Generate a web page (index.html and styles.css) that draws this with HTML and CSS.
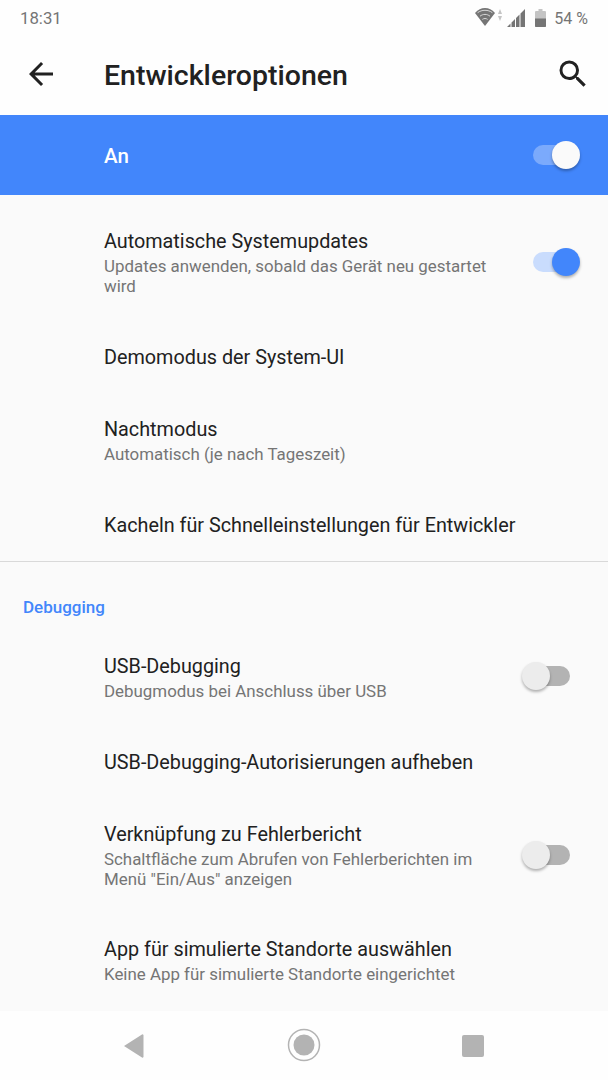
FILE: index.html
```html
<!doctype html>
<html lang="de">
  <head>
    <meta charset="UTF-8" />
    <title>Entwickleroptionen</title>
    <link rel="stylesheet" href="styles.css">
  </head>
  <body>
    <div class="status-bar">
      <span class="time">18:31</span>
      <div class="status-icons">
        <svg class="wifi" width="28" height="20" viewBox="0 0 28 20">
          <path d="M10 18 0 5C3 1.600 6.200 0 10 0s7 1.600 10 5z" fill="#757575" />
          <path d="M2.600 4.700C4.800 3.100 7.200 2.300 10 2.300s5.200.8 7.400 2.400M5 8.200C6.500 7 8.200 6.400 10 6.400s3.500.6 5 1.800M7.400 11.400c.8-.6 1.600-.9 2.600-.9s1.800.3 2.600.9" fill="none" stroke="#d8d8d8" stroke-width="1" />
          <path d="M23 6 25 1 27 6zM23 8 25 13 27 8z" fill="#c4c4c4" />
        </svg>
        <svg class="signal" width="18" height="18" viewBox="0 0 18 18">
          <path d="M0 18 3.500 14.500V18zM4.500 18V13.500L8 10V18zM9 18V9L12.500 5.500V18zM13.500 18V4.500L18 0V18z" fill="#757575" />
        </svg>
        <svg class="battery" width="11" height="18" viewBox="0 0 11 18">
          <path d="M3.500 0h4v2H10a1 1 0 0 1 1 1v15H0V3a1 1 0 0 1 1-1h2.500z" fill="#c4c4c4" />
          <path d="M0 9.500h11V17a1 1 0 0 1-1 1H1a1 1 0 0 1-1-1z" fill="#757575" />
        </svg>
        <span class="battery-text">54 %</span>
      </div>
    </div>

    <div class="toolbar">
      <svg class="icon-back" width="36" height="36" viewBox="0 0 24 24">
        <path d="M20 11H7.830l5.590-5.590L12 4l-8 8 8 8 1.410-1.410L7.830 13H20z" fill="#212121" />
      </svg>
      <h1>Entwickleroptionen</h1>
      <svg class="icon-search" width="36" height="36" viewBox="0 0 24 24">
        <path d="M15.500 14h-.79l-.28-.27A6.470 6.470 0 0 0 16 9.500 6.500 6.500 0 1 0 9.500 16c1.610 0 3.090-.59 4.230-1.570l.27.28v.79l5 4.990L20.490 19l-4.990-5zm-6 0C7.010 14 5 11.990 5 9.500S7.010 5 9.500 5 14 7.010 14 9.500 11.990 14 9.500 14z" fill="#212121" />
      </svg>
    </div>

    <div class="master-bar">
      <span>An</span>
      <div class="switch switch-master"><div class="thumb"></div></div>
    </div>

    <div class="list">
      <div class="row row-first">
        <div class="row-text">
          <div class="title">Automatische Systemupdates</div>
          <div class="sub">Updates anwenden, sobald das Gerät neu gestartet wird</div>
        </div>
        <div class="switch switch-on"><div class="thumb"></div></div>
      </div>
      <div class="row">
        <div class="row-text"><div class="title">Demomodus der System-UI</div></div>
      </div>
      <div class="row">
        <div class="row-text">
          <div class="title">Nachtmodus</div>
          <div class="sub">Automatisch (je nach Tageszeit)</div>
        </div>
      </div>
      <div class="row">
        <div class="row-text"><div class="title">Kacheln für Schnelleinstellungen für Entwickler</div></div>
      </div>

      <div class="section">
        <div class="section-title">Debugging</div>
        <div class="row row-usb">
          <div class="row-text">
            <div class="title">USB-Debugging</div>
            <div class="sub">Debugmodus bei Anschluss über USB</div>
          </div>
          <div class="switch switch-off"><div class="thumb"></div></div>
        </div>
        <div class="row">
          <div class="row-text"><div class="title">USB-Debugging-Autorisierungen aufheben</div></div>
        </div>
        <div class="row">
          <div class="row-text">
            <div class="title">Verknüpfung zu Fehlerbericht</div>
            <div class="sub">Schaltfläche zum Abrufen von Fehlerberichten im Menü "Ein/Aus" anzeigen</div>
          </div>
          <div class="switch switch-off"><div class="thumb"></div></div>
        </div>
        <div class="row">
          <div class="row-text">
            <div class="title">App für simulierte Standorte auswählen</div>
            <div class="sub">Keine App für simulierte Standorte eingerichtet</div>
          </div>
        </div>
      </div>
    </div>

    <div class="nav-bar">
      <svg width="22" height="26" viewBox="0 0 22 26">
        <path d="M19 1.500a1 1 0 0 1 1.500 1v21a1 1 0 0 1-1.500 1L1 13z" fill="#b3b3b3" />
      </svg>
      <svg class="nav-home" width="34" height="34" viewBox="0 0 34 34">
        <circle cx="17" cy="17" r="15.500" fill="none" stroke="#b3b3b3" stroke-width="1.500" />
        <circle cx="17" cy="17" r="10.500" fill="#b3b3b3" />
      </svg>
      <svg width="22" height="22" viewBox="0 0 22 22">
        <rect width="22" height="22" rx="2" fill="#b3b3b3" />
      </svg>
    </div>
  </body>
</html>
```

FILE: styles.css
```css
* {
  box-sizing: border-box;
}

body {
  width: 608px;
  height: 1080px;
  margin: 0;
  display: flex;
  flex-direction: column;
  overflow: hidden;
  background: #fafafa;
  color: #212121;
  font-family: Roboto, "Liberation Sans", sans-serif;
}

.status-bar {
  height: 36px;
  padding: 0 20px;
  display: flex;
  justify-content: space-between;
  align-items: center;
  background: #fefefe;
  color: #757575;
  font-size: 16.800px;
}

.status-icons {
  display: flex;
  align-items: center;
}

.wifi {
  margin-right: 4px;
}

.signal {
  margin-right: 10px;
}

.battery {
  margin-right: 8px;
}

.battery-text {
  font-size: 16px;
}

.toolbar {
  height: 79px;
  padding: 0 17px 0 23px;
  display: flex;
  align-items: center;
  background: #fefefe;
}

.toolbar h1 {
  flex: 1;
  margin: 0 0 0 45px;
  font-size: 28.500px;
  font-weight: 500;
}

.icon-back,
.icon-search {
  flex: none;
  margin-bottom: 3px;
}

.master-bar {
  height: 80px;
  padding: 2px 38px 0 104px;
  display: flex;
  justify-content: space-between;
  align-items: center;
  background: #4286fb;
  color: #fff;
  font-size: 20.500px;
  font-weight: 500;
}

.master-bar .switch {
  margin-top: -2px;
}

.list {
  flex: 1;
  overflow: hidden;
  padding-top: 11px;
}

.row {
  min-height: 72px;
  padding: 24px 38px 24px 104px;
  display: flex;
  justify-content: space-between;
  align-items: center;
}

.row-first {
  padding-bottom: 25px;
}

.row-usb {
  padding-bottom: 25px;
}

.row-text {
  width: 396px;
}

.title {
  font-size: 19.800px;
  line-height: 24px;
  white-space: nowrap;
}

.sub {
  margin: 3px 0 1px;
  font-size: 16.900px;
  line-height: 19.500px;
  color: #757575;
}

.section {
  margin-top: -1px;
  border-top: 1px solid #d9d9d9;
}

.section-title {
  padding: 35px 0 0 23px;
  height: 69px;
  font-size: 17px;
  font-weight: 500;
  color: #4286fb;
}

.switch {
  position: relative;
  flex: none;
  width: 37px;
  height: 20px;
  border-radius: 10px;
}

.thumb {
  position: absolute;
  top: -4px;
  width: 28px;
  height: 28px;
  border-radius: 50%;
  box-shadow: 0 2px 3px rgba(0, 0, 0, 0.3);
}

.switch-master {
  background: rgba(255, 255, 255, 0.3);
}

.switch-master .thumb {
  left: 19px;
  background: #fafafa;
}

.switch-on {
  margin-top: -3px;
  background: #c9dcfd;
}

.switch-on .thumb {
  left: 19px;
  background: #4286fb;
}

.switch-off {
  margin-top: -4px;
  background: #b3b3b3;
}

.switch-off .thumb {
  left: -11px;
  background: #ececec;
}

.nav-bar {
  height: 69px;
  flex: none;
  padding: 0 124px 0 123px;
  display: flex;
  justify-content: space-between;
  align-items: center;
  background: #fefefe;
}

.nav-home {
  margin-bottom: 1px;
}
```
